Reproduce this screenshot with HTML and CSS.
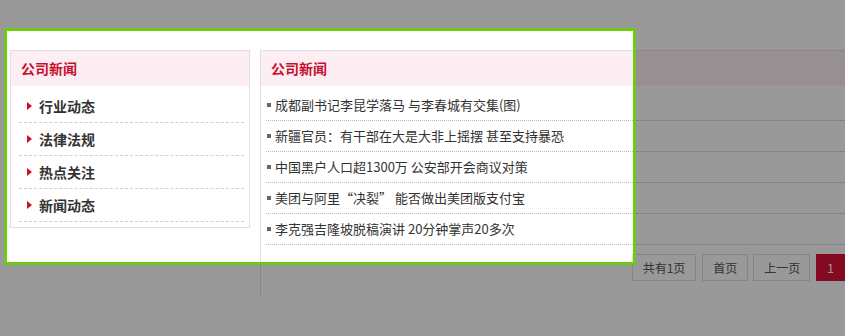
FILE: index.html
```html
<!DOCTYPE html>
<html lang="zh-CN">
<head>
    <meta charset="UTF-8">
    <meta name="viewport" content="width=device-width, initial-scale=1.0">
    <title>公司新闻</title>
    <link rel="stylesheet" href="styles.css">
</head>
<body>
    <div class="page">
        <div class="side">
            <h2 class="box-title">公司新闻</h2>
            <ul class="side-menu">
                <li><a href="#">行业动态</a></li>
                <li><a href="#">法律法规</a></li>
                <li><a href="#">热点关注</a></li>
                <li><a href="#">新闻动态</a></li>
            </ul>
        </div>

        <div class="main">
            <h2 class="box-title">公司新闻</h2>
            <ul class="news-list">
                <li><a href="#">成都副书记李昆学落马 与李春城有交集(图)</a></li>
                <li><a href="#">新疆官员：有干部在大是大非上摇摆 甚至支持暴恐</a></li>
                <li><a href="#">中国黑户人口超1300万 公安部开会商议对策</a></li>
                <li><a href="#">美团与阿里“决裂” 能否做出美团版支付宝</a></li>
                <li><a href="#">李克强吉隆坡脱稿演讲 20分钟掌声20多次</a></li>
            </ul>
            <div class="pager">
                <span>共有1页</span>
                <a href="#">首页</a>
                <a href="#" class="prev">上一页</a>
                <a href="#" class="current">1</a>
            </div>
        </div>
    </div>

    <!-- selection frame -->
    <div class="highlight"></div>
</body>
</html>
```

FILE: styles.css
```css
body {
    margin: 0;
    padding: 0;
    background: #fff;
    font-family: "Noto Sans CJK SC", "Noto Sans", sans-serif;
    color: #333;
    overflow: hidden;
}

a {
    color: #333;
    text-decoration: none;
}

ul {
    list-style: none;
    margin: 0;
}

.page {
    display: flex;
    align-items: flex-start;
    gap: 10px;
    padding: 50px 0 0 10px;
}

.side {
    width: 240px;
    flex-shrink: 0;
    box-sizing: border-box;
    border: 1px solid #e0e0e0;
}

.main {
    width: 585px;
    flex-shrink: 0;
    box-sizing: border-box;
    height: 245px;
    border: 1px solid #e0e0e0;
    border-bottom: none;
    border-right: none;
}

.box-title {
    margin: 0;
    height: 35px;
    line-height: 35px;
    padding-left: 10px;
    background: #fdeef3;
    color: #c8102e;
    font-size: 14px;
    font-weight: bold;
}

/* left menu */
.side-menu {
    padding: 4px 5px 5px 8px;
}

.side-menu li {
    height: 32px;
    line-height: 32px;
    border-bottom: 1px dashed #cfcfcf;
    font-size: 14px;
    font-weight: bold;
    display: flex;
    align-items: center;
}

.side-menu li::before {
    content: "";
    width: 0;
    height: 0;
    margin: 0 7px 0 8px;
    border-left: 5px solid #c8102e;
    border-top: 4px solid transparent;
    border-bottom: 4px solid transparent;
}

/* news list */
.news-list {
    padding: 4px 0 0 5px;
}

.news-list li {
    height: 30px;
    line-height: 30px;
    border-bottom: 1px dotted #bbb;
    font-size: 13px;
    display: flex;
    align-items: center;
}

.news-list li::before {
    content: "";
    width: 4px;
    height: 4px;
    margin: 0 4px 0 1px;
    background: #666;
}

.pager {
    display: flex;
    justify-content: flex-end;
    gap: 6px;
    margin-top: 9px;
    font-size: 12px;
}

.pager span,
.pager a {
    height: 25px;
    line-height: 25px;
    padding: 0 10px;
    border: 1px solid #ddd;
    color: #555;
}

.pager a.prev {
    padding: 0 9px 0 10px;
    margin-left: -1px;
}

.pager a.current {
    background: #dc1239;
    border-color: #dc1239;
    color: #fff;
}

.highlight {
    position: absolute;
    left: 4px;
    top: 28px;
    width: 626px;
    height: 231px;
    border: 3px solid #6fc916;
    box-shadow: 0 0 0 2000px rgba(0, 0, 0, 0.4);
    pointer-events: none;
}
```
